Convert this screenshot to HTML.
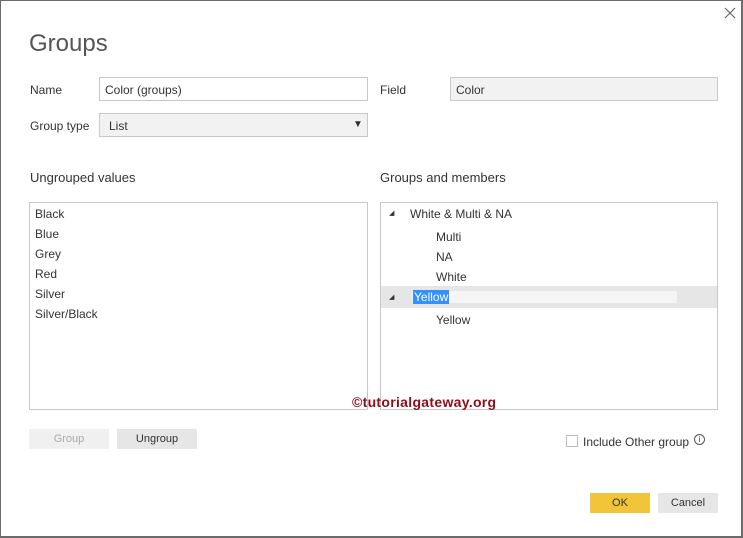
<!DOCTYPE html>
<html><head><style>
*{box-sizing:border-box;margin:0;padding:0}
body{width:743px;height:538px;background:#fff;font-family:"Liberation Sans",sans-serif;font-size:12px;color:#333;position:relative;overflow:hidden}
.frame{position:absolute;left:0;top:0;width:743px;height:538px;border:1px solid #6b6b6b;border-bottom-width:2px;border-right-width:2px}
.a{position:absolute;white-space:nowrap}
.box{position:absolute;border:1px solid #c8c8c8;background:#fff}
</style></head><body>
<div class="frame"></div>
<svg class="a" style="left:724px;top:7px" width="12" height="12"><path d="M1 1L11 11M11 1L1 11" stroke="#666" stroke-width="1.2"/></svg>
<div class="a" style="left:29px;top:30px;font-size:24px;color:#555">Groups</div>
<div class="a" style="left:30px;top:83px">Name</div>
<div class="box" style="left:99px;top:77px;width:269px;height:24px"></div>
<div class="a" style="left:105px;top:83px">Color (groups)</div>
<div class="a" style="left:380px;top:83px">Field</div>
<div class="box" style="left:450px;top:77px;width:268px;height:24px;background:#f2f2f2"></div>
<div class="a" style="left:456px;top:83px">Color</div>
<div class="a" style="left:30px;top:119px">Group type</div>
<div class="box" style="left:99px;top:113px;width:269px;height:24px;background:#f2f2f2"></div>
<div class="a" style="left:109px;top:119px">List</div>
<div class="a" style="left:353px;top:119px;font-size:10px">▼</div>
<div class="a" style="left:30px;top:170px;font-size:13px">Ungrouped values</div>
<div class="a" style="left:380px;top:170px;font-size:13px">Groups and members</div>
<div class="box" style="left:29px;top:202px;width:339px;height:208px"></div>
<div class="a" style="left:35px;top:204px;line-height:20px">Black<br>Blue<br>Grey<br>Red<br>Silver<br>Silver/Black</div>
<div class="box" style="left:380px;top:202px;width:338px;height:208px"></div>
<div class="a" style="left:389px;top:209px;font-size:7px">◢</div>
<div class="a" style="left:410px;top:207px">White &amp; Multi &amp; NA</div>
<div class="a" style="left:436px;top:227px;line-height:20px">Multi<br>NA<br>White</div>
<div class="a" style="left:381px;top:286px;width:336px;height:22px;background:#e6e6e6"></div>
<div class="a" style="left:412px;top:291px;width:265px;height:12px;background:#f5f5f5"></div>
<div class="a" style="left:389px;top:293px;font-size:7px">◢</div>
<div class="a" style="left:413px;top:290px;background:#3390ff;color:#fff;line-height:14px;padding:0 1px">Yellow</div>
<div class="a" style="left:436px;top:313px">Yellow</div>
<div class="a" style="left:352px;top:394px;font-size:14px;font-weight:bold;color:#8b0e1a;letter-spacing:0.3px">©tutorialgateway.org</div>
<div class="a" style="left:29px;top:429px;width:80px;height:20px;background:#f0f0f0;color:#aaa;text-align:center;line-height:20px;font-size:11px">Group</div>
<div class="a" style="left:117px;top:429px;width:80px;height:20px;background:#e6e6e6;text-align:center;line-height:20px;font-size:11px">Ungroup</div>
<div class="a" style="left:566px;top:435px;width:12px;height:12px;border:1px solid #bbb"></div>
<div class="a" style="left:583px;top:435px">Include Other group</div>
<div class="a" style="left:694px;top:434px;width:11px;height:11px;border:1px solid #555;border-radius:50%;font-size:8px;text-align:center;line-height:9px">i</div>
<div class="a" style="left:590px;top:493px;width:60px;height:20px;background:#f2c43a;text-align:center;line-height:20px;font-size:11px">OK</div>
<div class="a" style="left:658px;top:493px;width:60px;height:20px;background:#e6e6e6;text-align:center;line-height:20px;font-size:11px">Cancel</div>
</body></html>
